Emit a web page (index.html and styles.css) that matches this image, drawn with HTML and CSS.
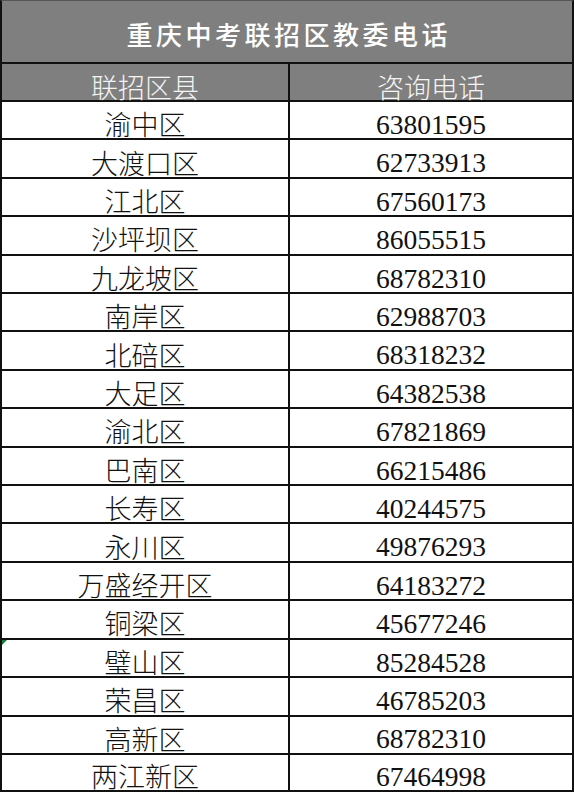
FILE: index.html
```html
<!DOCTYPE html>
<html lang="zh-CN">
<head>
<meta charset="utf-8">
<title>重庆中考联招区教委电话</title>
<link rel="stylesheet" href="styles.css">
</head>
<body>
<div class="sheet">
  <div class="row title-row"><div class="title">重庆中考联招区教委电话</div></div>
  <div class="row head-row"><div class="cell c1">联招区县</div><div class="cell c2">咨询电话</div></div>
  <div class="row"><div class="cell c1">渝中区</div><div class="cell c2 num">63801595</div></div>
  <div class="row"><div class="cell c1">大渡口区</div><div class="cell c2 num">62733913</div></div>
  <div class="row"><div class="cell c1">江北区</div><div class="cell c2 num">67560173</div></div>
  <div class="row"><div class="cell c1">沙坪坝区</div><div class="cell c2 num">86055515</div></div>
  <div class="row"><div class="cell c1">九龙坡区</div><div class="cell c2 num">68782310</div></div>
  <div class="row"><div class="cell c1">南岸区</div><div class="cell c2 num">62988703</div></div>
  <div class="row"><div class="cell c1">北碚区</div><div class="cell c2 num">68318232</div></div>
  <div class="row"><div class="cell c1">大足区</div><div class="cell c2 num">64382538</div></div>
  <div class="row"><div class="cell c1">渝北区</div><div class="cell c2 num">67821869</div></div>
  <div class="row"><div class="cell c1">巴南区</div><div class="cell c2 num">66215486</div></div>
  <div class="row"><div class="cell c1">长寿区</div><div class="cell c2 num">40244575</div></div>
  <div class="row"><div class="cell c1">永川区</div><div class="cell c2 num">49876293</div></div>
  <div class="row"><div class="cell c1">万盛经开区</div><div class="cell c2 num">64183272</div></div>
  <div class="row"><div class="cell c1">铜梁区</div><div class="cell c2 num">45677246</div></div>
  <div class="row"><div class="cell c1 flag">璧山区</div><div class="cell c2 num">85284528</div></div>
  <div class="row"><div class="cell c1">荣昌区</div><div class="cell c2 num">46785203</div></div>
  <div class="row"><div class="cell c1">高新区</div><div class="cell c2 num">68782310</div></div>
  <div class="row last-row"><div class="cell c1">两江新区</div><div class="cell c2 num">67464998</div></div>
</div>
</body>
</html>
```
FILE: styles.css
```css
html, body {
  margin: 0;
  padding: 0;
  background: #ffffff;
}
body {
  width: 574px;
  height: 794px;
  overflow: hidden;
  font-family: "Liberation Serif", "Noto Sans CJK SC", serif;
  color: #111111;
}
.sheet {
  width: 574px;
  box-sizing: border-box;
  border-left: 2px solid #111;
  border-right: 2px solid #111;
  border-top: 1px solid #555;
}
.row {
  display: flex;
  box-sizing: border-box;
  height: 38.41px;
  border-bottom: 2px solid #111;
}
.title-row {
  height: 63px;
  background: #7f7f7f;
  justify-content: center;
  align-items: center;
}
.title {
  color: #ffffff;
  font-family: "Noto Sans CJK SC", sans-serif;
  font-weight: 500;
  font-size: 26px;
  letter-spacing: 3.5px;
  padding-left: 3.5px;
  padding-top: 5px;
  line-height: 1;
}
.head-row {
  height: 38px;
  background: #7f7f7f;
}
.head-row .cell {
  color: #f4f4f4;
  font-weight: 300;
  padding-top: 9px;
}
.last-row {
  height: 37px;
}
.cell {
  box-sizing: border-box;
  display: flex;
  justify-content: center;
  align-items: center;
  font-size: 27px;
  line-height: 1;
  padding-top: 7px;
  font-family: "Noto Sans CJK SC", sans-serif;
  font-weight: 300;
}
.c1 {
  width: 288px;
  border-right: 2px solid #111;
  position: relative;
}
.c2 {
  flex: 1;
}
.num {
  font-family: "Liberation Serif", serif;
  font-weight: 400;
  font-size: 27.5px;
  padding-top: 9px;
}
.flag::before {
  content: "";
  position: absolute;
  left: 0;
  top: 0;
  width: 0;
  height: 0;
  border-top: 5px solid #1e7a3a;
  border-right: 5px solid transparent;
}
```
